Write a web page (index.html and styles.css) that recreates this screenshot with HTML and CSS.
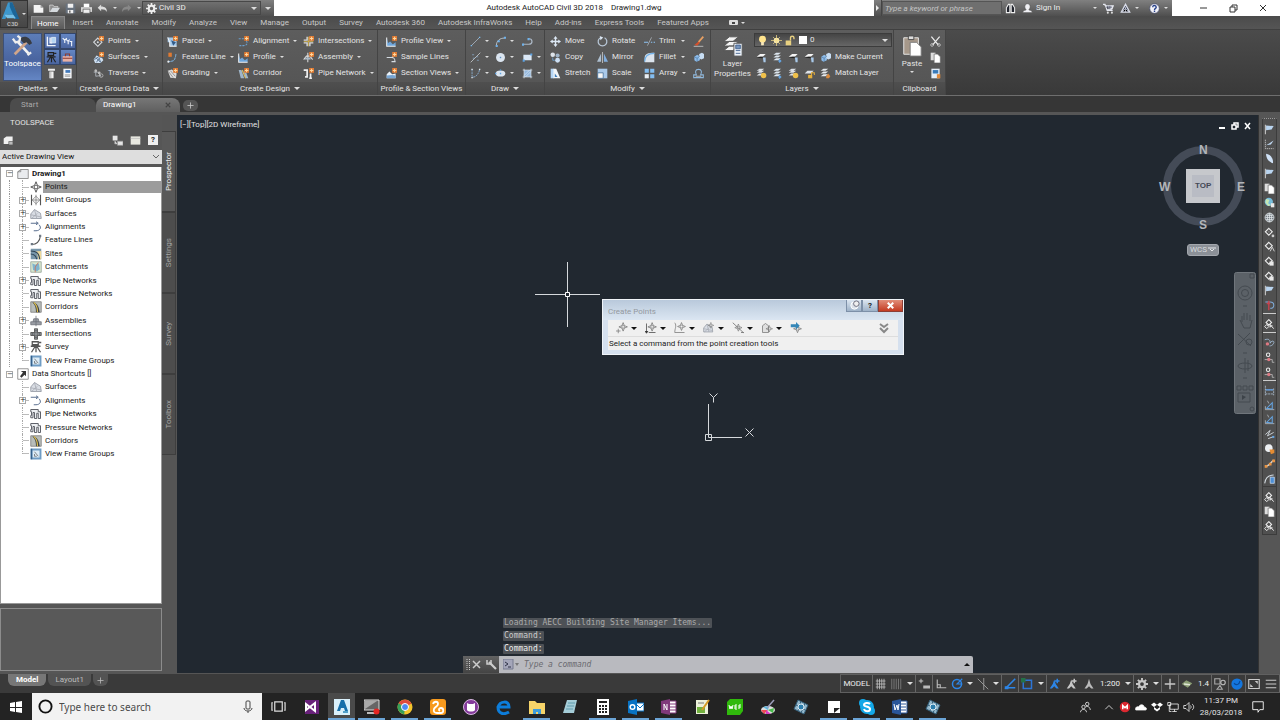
FILE: index.html
```html
<!DOCTYPE html>
<html lang="en">
<head>
<meta charset="utf-8">
<title>Autodesk AutoCAD Civil 3D 2018 - Drawing1.dwg</title>
<link rel="stylesheet" href="styles.css">
</head>
<body>
<svg class="sprite" aria-hidden="true">
<symbol id="new" viewBox="0 0 16 16"><path d="M9 0h7v7H9z" fill="#e07a32"/><path d="M12.500 1v5M10 3.500h5" stroke="#ffd9a0" stroke-width="1.500"/></symbol>
<symbol id="gear" viewBox="0 0 16 16"><circle cx="8" cy="8" r="4" fill="none" stroke="currentColor" stroke-width="3"/><path d="M8 0v4M8 12v4M0 8h4M12 8h4M2.500 2.500l3 3M10.500 10.500l3 3M13.500 2.500l-3 3M5.500 10.500l-3 3" stroke="currentColor" stroke-width="2.500"/></symbol>
<symbol id="page" viewBox="0 0 16 16"><path d="M1 3h10l4 4v7H1z" fill="#f4f4f4"/><path d="M11 3v4h4z" fill="#999"/></symbol>
<symbol id="open" viewBox="0 0 16 16"><path d="M1 13V3h5l1 2h6v2" fill="#8c8c8c" stroke="#ddd"/><path d="M1 13l4-6h11l-4 6z" fill="#d5dade"/></symbol>
<symbol id="save" viewBox="0 0 16 16"><path d="M1 1h14v14H1z" fill="#68727e"/><path d="M4 1h8v6H4zM4 10h8v5H4z" fill="#f0f0f0"/><path d="M6 11h2v3H6z" fill="#555"/></symbol>
<symbol id="print" viewBox="0 0 16 16"><path d="M4 1h8v5H4z" fill="#fff"/><path d="M0 6h16v7H0z" fill="#d4d4d4"/><path d="M3 9h10v6H3z" fill="#eee" stroke="#555"/></symbol>
<symbol id="undo" viewBox="0 0 16 16"><path d="M6 2L1 7l5 5V9c5 0 7 1 8 4 1-5-2-8-8-8z" fill="#ddd"/></symbol>
<symbol id="redo" viewBox="0 0 16 16"><path d="M10 2l5 5-5 5V9c-5 0-7 1-8 4-1-5 2-8 8-8z" fill="#888"/></symbol>
<symbol id="bino" viewBox="0 0 16 16"><path d="M2 14V7l3-5h2v12zM9 14V2h2l3 5v7z" fill="#22252e" stroke="#eee" stroke-width="1.500"/></symbol>
<symbol id="user" viewBox="0 0 16 16"><path d="M1 14c0-3 3-4 5-4-4-5-1-9 2-9s6 4 2 9c2 0 5 1 5 4z" fill="#f0f0f4" stroke="#555"/></symbol>
<symbol id="cart" viewBox="0 0 16 16"><path d="M0 2h3l3 9h8M4 4h11l-2 5H6" fill="#e4e6ee" stroke="#e4e6ee" stroke-width="1.500"/><path d="M5 6h8M7 4v5M10 4v5" stroke="#34384e"/><circle cx="7" cy="14" r="1.500" fill="#ddd"/><circle cx="13" cy="14" r="1.500" fill="#ddd"/></symbol>
<symbol id="apps" viewBox="0 0 16 16"><path d="M8 2l6 11H2z" fill="#30364b" stroke="#d9dce8" stroke-width="2"/><path d="M8 6v7M4 12l4-4 4 4" stroke="#d9dce8"/></symbol>
<symbol id="help" viewBox="0 0 16 16"><circle cx="8" cy="8" r="7" fill="#f2f2f8" stroke="#43496a"/><path d="M5.500 6c0-3.500 5-3 5 0 0 2-2.500 1.500-2.500 4M8 11v2" fill="none" stroke="#27418a" stroke-width="2"/></symbol>
<symbol id="diam" viewBox="0 0 16 16"><path d="M8 1l2 5 5 2-5 2-2 5-2-5-5-2 5-2z" fill="none" stroke="currentColor" stroke-width="1.300"/><circle cx="8" cy="8" r="2.300" fill="none" stroke="currentColor"/></symbol>
<symbol id="points" viewBox="0 0 16 16"><path d="M7 3l6 6-6 6-6-6z" fill="none" stroke="#d5d8dc" stroke-width="1.600"/><circle cx="7" cy="9" r="1.500" fill="#d5d8dc"/><use href="#new"/></symbol>
<symbol id="surf" viewBox="0 0 16 16"><path d="M1 11l4-6 8 3 2 4-4 4H3z" fill="#cfe0f2"/><path d="M2 11l6-4 5 1M5 15l4-6 2 6M4 8l7 7" stroke="#334e6d" fill="none"/><use href="#new"/></symbol>
<symbol id="trav" viewBox="0 0 16 16"><path d="M4 2v10M1 6h6M4 12l7-1M7 7l5 5" stroke="#aeb4bb" stroke-width="1.300" fill="none"/><circle cx="12" cy="11" r="2.500" fill="none" stroke="#ccc"/><circle cx="4" cy="4" r="2" fill="#bbb"/><circle cx="9" cy="7" r="2" fill="#bbb"/></symbol>
<symbol id="parcel" viewBox="0 0 16 16"><path d="M1 2h8v5h5v8H4V9H1z" fill="#a3c8ea"/><path d="M1 2l3 7v6h10" fill="none" stroke="#f2f2f2" stroke-width="1.500"/><path d="M6 6l3 8 4-5z" fill="#335c8a"/><use href="#new"/></symbol>
<symbol id="fline" viewBox="0 0 16 16"><path d="M1 14c9 0 11-2 12-11" stroke="#7aaad4" stroke-width="1.500" fill="none" stroke-dasharray="4 1"/><path d="M2 1h5v6H2z" fill="#e07a32"/><circle cx="2" cy="14" r="1.500" fill="#eee"/></symbol>
<symbol id="grading" viewBox="0 0 16 16"><path d="M1 4l6-2 7 6-1 7-8-1z" fill="#ddd"/><path d="M2 5l7 9M5 4l7 8" stroke="#777"/><use href="#new"/></symbol>
<symbol id="align" viewBox="0 0 16 16"><path d="M1 4h9M12 7c3 4 0 7-4 7H2" fill="none" stroke="#6a9ecd" stroke-width="1.500" stroke-dasharray="3 1.500"/><use href="#new"/></symbol>
<symbol id="profile" viewBox="0 0 16 16"><path d="M1 2v13h13V9l-4 3-4-4-3 2" fill="#6ea6dc"/><path d="M1 2v13h13" fill="none" stroke="#eee" stroke-width="1.500"/><use href="#new"/></symbol>
<symbol id="corridor" viewBox="0 0 16 16"><path d="M1 3h4l4 12H4zM8 4h3l4 11h-4z" fill="#9fb5c9"/><path d="M6 3l5 12" stroke="#e0c060" stroke-width="1.500"/><use href="#new"/></symbol>
<symbol id="inters" viewBox="0 0 16 16"><path d="M6 1v5H1M10 1v5h5M6 15v-5H1M10 15v-5h5" fill="none" stroke="#ddd" stroke-width="2"/><path d="M8 1v14M1 8h14" stroke="#d8b545"/><use href="#new"/></symbol>
<symbol id="assembly" viewBox="0 0 16 16"><path d="M7 1v14M1 11l4-5h5l4 5" stroke="#ddd" stroke-width="1.500" fill="none"/><path d="M3 8h8v3H3z" fill="#aab8c5"/><use href="#new"/></symbol>
<symbol id="pipe" viewBox="0 0 16 16"><path d="M1 3h5v10H3M11 15V8M9 15h4" stroke="#eee" stroke-width="2.500" fill="none"/><use href="#new"/></symbol>
<symbol id="sample" viewBox="0 0 16 16"><path d="M1 8h7c3 0 3-4 3-5M8 8c5 0 5 3 5 6M8 14h6" stroke="#d5dce2" stroke-width="1.500" fill="none"/><use href="#new"/></symbol>
<symbol id="secview" viewBox="0 0 16 16"><path d="M1 15V9l4-4 4 4 5-1v7z" fill="#eaf1f8"/><path d="M1 15v-4l8-1 5 1v4z" fill="#76a5d4"/><use href="#new"/></symbol>
<symbol id="line" viewBox="0 0 16 16"><path d="M2 14L14 2" stroke="#aab6c2" stroke-width="1.200"/><path d="M1 13h2v2H1zM13 1h2v2h-2z" fill="#7dbdf0"/></symbol>
<symbol id="cline" viewBox="0 0 16 16"><path d="M1 15L15 1" stroke="#c8ccd0" stroke-width="1.200"/><path d="M3 4h3M9 7h3M4 9h3M10 12h3" stroke="#8db3d6"/></symbol>
<symbol id="spl" viewBox="0 0 16 16"><path d="M3 2v10c0 3 9 1 11-10" stroke="#8eb5da" stroke-width="1.200" fill="none" stroke-dasharray="3 1"/><path d="M2 1h2v2H2zM2 13h2v2H2zM13 1h2v2h-2z" fill="#dfe8f0"/></symbol>
<symbol id="arc" viewBox="0 0 16 16"><path d="M2 14C2 7 7 3 14 3" stroke="#c2cad2" stroke-width="1.300" fill="none"/><path d="M1 13h3v3H1zM4 6h3v3H4zM13 1h3v3h-3z" fill="#6fb1ea"/></symbol>
<symbol id="pline" viewBox="0 0 16 16"><path d="M1 12h9c6 0 6-8 0-8" stroke="#aab6c4" stroke-width="1.800" fill="none"/><path d="M0 11h3v3H0zM8 3h3v3H8z" fill="#6fb1ea"/></symbol>
<symbol id="circ" viewBox="0 0 16 16"><circle cx="8" cy="8" r="6.500" fill="#dbe5f0"/><path d="M7 7h2v2H7z" fill="#5c91c4"/></symbol>
<symbol id="ell" viewBox="0 0 16 16"><ellipse cx="8" cy="8" rx="7" ry="4.500" fill="#dbe5f0"/><path d="M7 2h2v2H7zM7 7h2v2H7zM0 7h2v2H0z" fill="#5ca3e4"/></symbol>
<symbol id="rect" viewBox="0 0 16 16"><path d="M2 4h12v8H2z" fill="#dbe8f6"/><path d="M1 11h3v3H1zM12 2h3v3h-3z" fill="#5ca3e4"/></symbol>
<symbol id="hatch" viewBox="0 0 16 16"><path d="M3 3h10v10H3z" fill="#93b7dc"/><path d="M1 3h14M1 13h14M3 1v14M13 1v14M3 11l8-8M5 13l8-8" stroke="#e1ebf5"/></symbol>
<symbol id="move" viewBox="0 0 16 16"><path d="M8 0l3 4H9v3h3V5l4 3-4 3V9H9v3h2l-3 4-3-4h2V9H4v2L0 8l4-3v2h3V4H5z" fill="#dce8f4"/></symbol>
<symbol id="copy" viewBox="0 0 16 16"><circle cx="4" cy="4" r="3.300" fill="#dde3ea"/><circle cx="11" cy="5" r="3" fill="#9fb3c8"/><circle cx="11" cy="12" r="3.500" fill="#cde0f5"/><path d="M4 8v4h3" stroke="#6fb1ea" fill="none"/></symbol>
<symbol id="stretch" viewBox="0 0 16 16"><path d="M1 1h5v14H1z" fill="#b6d6f5"/><path d="M5 1h4l6 14H5z" fill="#f1f4f7"/><path d="M7 8l4 5H7z" fill="#3d7cba"/></symbol>
<symbol id="rot" viewBox="0 0 16 16"><path d="M5 2.500a6.300 6.300 0 1 0 6 0" fill="none" stroke="#b9c8d8" stroke-width="1.800"/><path d="M4 0l5 2-4 4z" fill="#dce8f4"/></symbol>
<symbol id="mirror" viewBox="0 0 16 16"><path d="M6 2v12H0z" fill="#aebfd0"/><path d="M10 2v12h6z" fill="#82aede"/><path d="M8 0v16" stroke="#ddd"/></symbol>
<symbol id="scale" viewBox="0 0 16 16"><path d="M1 1h14v14H1z" fill="#a9c9ea"/><path d="M1 7h8v8H1z" fill="#f6f6f6" stroke="#33608d"/></symbol>
<symbol id="trim" viewBox="0 0 16 16"><path d="M0 9h6M10 9h2M14 9h2" stroke="#8cc2f4" stroke-width="1.500"/><path d="M5 14L11 2" stroke="#b9c1c8"/></symbol>
<symbol id="fillet" viewBox="0 0 16 16"><path d="M1 15V8c0-5 5-7 14-7v14z" fill="#dce4ed"/><path d="M1 14C1 5 7 2 15 2" fill="none" stroke="#6fb1ea" stroke-width="1.500"/></symbol>
<symbol id="array" viewBox="0 0 16 16"><path d="M1 1h6v6H1zM9 1h6v6H9zM9 9h6v6H9z" fill="#83bdf1"/><path d="M1 9h6v6H1z" fill="#e9eef3"/></symbol>
<symbol id="brush" viewBox="0 0 16 16"><path d="M15 1L8 9" stroke="#e8a063" stroke-width="2.500"/><path d="M8 8l2 2-4 4-4-1z" fill="#d4502c"/><path d="M1 15h14" stroke="#ddd"/></symbol>
<symbol id="explode" viewBox="0 0 16 16"><path d="M2 7l4-3 4 2v6l-5 2-3-2z" fill="#8dbceb"/><path d="M9 3l4-2 3 2v6l-4 2-3-2z" fill="#c7ddf3"/><path d="M2 7l4 2v5M6 9l4-3" stroke="#4d779f" fill="none"/></symbol>
<symbol id="offset" viewBox="0 0 16 16"><path d="M1 14h14v-4h-4c2-4 2-8-3-8s-5 4-3 8H1z" fill="none" stroke="#8fb8dd" stroke-width="1.500"/><path d="M4 12h8" stroke="#ddd"/></symbol>
<symbol id="lay" viewBox="0 0 16 16"><path d="M1 7l5-4h8l-4 4z" fill="#f5f5f5"/><path d="M1 8l5-1h5l-2 2z" fill="#222"/><path d="M10 8h4v7h-3z" fill="#a9c9e9"/></symbol>
<symbol id="lay2" viewBox="0 0 16 16"><path d="M2 12l4-3h7l-4 3zM2 8l4-3h7L9 8zM2 4l4-3h7L9 4z" fill="#dde7f0"/><path d="M11 10l3 3-3 3-2-3z" fill="#65a5e2"/></symbol>
<symbol id="layy" viewBox="0 0 16 16"><path d="M1 11l4-3h7l-4 3zM1 7l4-3h7L8 7zM1 4l4-3h7L8 4z" fill="#dde2e8"/><circle cx="11" cy="11" r="4" fill="#efc04b"/></symbol>
<symbol id="layo" viewBox="0 0 16 16"><path d="M1 8l4-4h9l-4 4z" fill="#dde2e8"/><path d="M6 10h6v5H6z" fill="#e6b03c"/><path d="M11 10V7h4v3" stroke="#e6b03c" stroke-width="1.500" fill="none"/></symbol>
<symbol id="laym" viewBox="0 0 16 16"><path d="M1 12l4-3h7l-4 3zM1 8l4-3h7L8 8zM1 4l4-3h7L8 4z" fill="#e6eaee"/><path d="M9 12l3-4 3 4-2 3H9z" fill="#d98a3e"/></symbol>
<symbol id="bulb" viewBox="0 0 16 16"><circle cx="8" cy="6" r="5" fill="#ffe48d"/><path d="M6 10h4v5H6z" fill="#f8e8ba"/></symbol>
<symbol id="sun" viewBox="0 0 16 16"><circle cx="8" cy="8" r="4" fill="#f6e9b8"/><path d="M8 0v16M0 8h16M3 3l10 10M13 3L3 13" stroke="#f6df88"/></symbol>
<symbol id="lock" viewBox="0 0 16 16"><path d="M1 8h8v7H1z" fill="#e8d080"/><path d="M8 8V4c0-3 5-3 5 0v2" fill="none" stroke="#e8d080" stroke-width="2"/></symbol>
<symbol id="scis" viewBox="0 0 16 16"><path d="M2 1l10 12M14 1L4 13" stroke="#eee" stroke-width="1.800"/><circle cx="3" cy="13" r="2" fill="none" stroke="#ddd"/><circle cx="13" cy="13" r="2" fill="none" stroke="#ddd"/></symbol>
<symbol id="dup" viewBox="0 0 16 16"><path d="M1 1h7v11H1z" fill="#ddd"/><path d="M6 3h5l4 4v9H6z" fill="#fff" stroke="#666"/></symbol>
<symbol id="pspec" viewBox="0 0 16 16"><path d="M2 1h12v14H2z" fill="#e5eef8"/><path d="M4 3h8v5H4z" fill="#397ab9"/><path d="M10 9h5v6h-5z" fill="#e08a3c"/></symbol>
<symbol id="book" viewBox="0 0 16 16"><path d="M2 1v13h12M6 2v8h3" stroke="#f2f6fc" stroke-width="2" fill="none"/><path d="M8 2h6v8H8z" fill="#b5d6f3" stroke="#f2f6fc"/></symbol>
<symbol id="ttt" viewBox="0 0 16 16"><path d="M1 3l3 3 3-3M4 6v4M6 5l3 3 2-3M9 8v4M11 8h4M14 8v7" stroke="#f0f5fc" stroke-width="1.600" fill="none"/></symbol>
<symbol id="transit" viewBox="0 0 16 16"><path d="M3 1h8v4H3zM12 2h3M1 7h13M7 5v3M7 7l-5 8M8 7v8M9 7l5 8" stroke="currentColor" stroke-width="1.700" fill="none"/></symbol>
<symbol id="toolbox" viewBox="0 0 16 16"><path d="M1 6h14v8H1z" fill="#e8b0a4"/><path d="M5 6V3h6v3M1 9h14" stroke="#8c3b31" stroke-width="1.500" fill="none"/></symbol>
<symbol id="cols" viewBox="0 0 16 16"><path d="M3 1h10v3H3zM5 5h6v10H5z" fill="#f1f1f1"/><path d="M7 5v10" stroke="#999"/></symbol>
<symbol id="cal" viewBox="0 0 16 16"><path d="M2 1h12v14H2z" fill="#f5f7fa"/><path d="M5 3h7v4H5z" fill="#4279bb"/><path d="M4 10h8M4 12h8" stroke="#777"/></symbol>
<symbol id="pgroup" viewBox="0 0 16 16"><path d="M2 1v14M14 1v14" stroke="#555" stroke-width="1.500"/><path d="M8 3l5 5-5 5-5-5zM8 1v14M3 8h10" fill="none" stroke="#777"/></symbol>
<symbol id="tsurf" viewBox="0 0 16 16"><path d="M1 14V8l5-6 8 5 1 7z" fill="#d9dde4" stroke="#8a8f99"/><path d="M1 9l14 3M6 2l3 12M2 14l8-7" stroke="#a5aab2"/></symbol>
<symbol id="talign" viewBox="0 0 16 16"><path d="M1 3h9M8 1l3 2-3 2M12 5c4 4 1 8-4 8H5" fill="none" stroke="#556b8c" stroke-width="1.300"/></symbol>
<symbol id="tfl" viewBox="0 0 16 16"><path d="M2 14c8 0 11-4 12-12" fill="none" stroke="#555" stroke-width="1.500"/><path d="M1 12h3v3H1zM12 1h3v3h-3z" fill="#6e7884"/></symbol>
<symbol id="tsite" viewBox="0 0 16 16"><path d="M1 1h14v14H1z" fill="#7796aa"/><path d="M1 5h8l2 10h4V4" fill="#ecd89a"/><path d="M1 4c8 0 11 3 12 11M1 8c5 0 7 2 8 7" stroke="#2d4355" stroke-width="1.500" fill="none"/></symbol>
<symbol id="tcatch" viewBox="0 0 16 16"><path d="M1 1h14v14H1z" fill="#d9e8cf" stroke="#8e9b91"/><path d="M3 3l4 2 5-2 1 8-4 3-5-2z" fill="#7fb4ce"/><path d="M11 2l-4 6v7" stroke="#d06950" fill="none"/></symbol>
<symbol id="tpipe" viewBox="0 0 16 16"><path d="M1 2h10v3h3v9h-3V7H9v7H6V6H4v7H1v-3h1V5H1z" fill="#eceef1" stroke="#5a5e66" stroke-width="1.300"/></symbol>
<symbol id="tcorr" viewBox="0 0 16 16"><path d="M1 1h14v14H1z" fill="#b8bdba" stroke="#777"/><path d="M3 2h3c5 3 6 7 7 13H8c0-6-1-10-5-13z" fill="#3c4146"/><path d="M5 2c4 3 5 7 5 13" stroke="#e2c24c" stroke-width="1.500" fill="none"/></symbol>
<symbol id="tasm" viewBox="0 0 16 16"><path d="M1 13V9h14v4zM4 9l1-4h6l1 4M8 1v14" fill="#9a9ea5" stroke="#696e76"/></symbol>
<symbol id="tint" viewBox="0 0 16 16"><path d="M6 1h4v5h5v4h-5v5H6v-5H1V6h5z" fill="#60656a" stroke="#444"/><path d="M8 1v14M1 8h14" stroke="#bbb" stroke-dasharray="2 1"/></symbol>
<symbol id="tview" viewBox="0 0 16 16"><path d="M2 2h12v12H2z" fill="#dcecf7" stroke="#6f9cc4" stroke-width="2.500"/><path d="M2 1v14" stroke="#35618c" stroke-width="2"/><path d="M6 5l5 6M6 8v3h3" stroke="#666" fill="none"/></symbol>
<symbol id="folder" viewBox="0 0 16 16"><path d="M1 14V5l4-3h10v12z" fill="#e9ebee" stroke="#777"/><path d="M1 5h4V2" fill="none" stroke="#777"/></symbol>
<symbol id="short" viewBox="0 0 16 16"><path d="M1 1h14v14H1z" fill="#fff" stroke="#777"/><path d="M5 4h7v7l-2-2-4 4-2-2 4-5z" fill="#333"/></symbol>
<symbol id="flag" viewBox="0 0 16 16"><path d="M2 1v14" stroke="#ccc" stroke-width="1.500"/><path d="M3 2l11 1-3 5-8 1z" fill="#b9d4ef"/></symbol>
<symbol id="slope" viewBox="0 0 16 16"><path d="M2 1v13h12" stroke="#ddd" fill="none" stroke-dasharray="2 1"/><path d="M3 9l5-3 6-4-4 6z" fill="#bfd8f2"/></symbol>
<symbol id="leaf" viewBox="0 0 16 16"><path d="M3 1c6 1 11 6 10 14C8 13 3 9 3 1z" fill="#cfe1f6"/></symbol>
<symbol id="globe" viewBox="0 0 16 16"><circle cx="8" cy="8" r="6.500" fill="#767d84" stroke="#e8edf0"/><path d="M8 2v12M2 8h12M3 5h10M3 11h10" stroke="#e8edf0"/><ellipse cx="8" cy="8" rx="3" ry="6" fill="none" stroke="#e8edf0"/></symbol>
<symbol id="earth" viewBox="0 0 16 16"><circle cx="7" cy="7" r="6" fill="#77bddb"/><path d="M3 3l5 1-2 5 4 3-4 1-4-5z" fill="#c6e7b4"/><path d="M10 9h5v6h-5z" fill="#e8e8e8"/></symbol>
<symbol id="pt" viewBox="0 0 16 16"><path d="M7 2l5 5-5 5-5-5z" fill="none" stroke="#eee" stroke-width="1.600"/><circle cx="7" cy="7" r="1.500" fill="#777"/><circle cx="13" cy="13" r="2" fill="#ccc"/></symbol>
<symbol id="pta" viewBox="0 0 16 16"><path d="M7 2l5 5-5 5-5-5z" fill="none" stroke="#eee" stroke-width="1.600"/><path d="M9 15l3-6 3 6" stroke="#ddd" fill="none" stroke-width="1.300"/></symbol>
<symbol id="ptl" viewBox="0 0 16 16"><path d="M7 2l5 5-5 5-5-5z" fill="none" stroke="#eee" stroke-width="1.600"/><path d="M8 8h6v6H8z" fill="#e8e8e8"/></symbol>
<symbol id="ptc" viewBox="0 0 16 16"><path d="M7 1l4 4-4 4-4-4z" fill="none" stroke="#eee" stroke-width="1.600"/><path d="M4 8l3 3-3 3-3-3zM9 8l5 6M9 8v4l3-3" fill="none" stroke="#f4f4f4" stroke-width="1.400"/></symbol>
<symbol id="red" viewBox="0 0 16 16"><path d="M2 3h7c7 0 7 9 0 9" fill="none" stroke="#7facdb" stroke-width="1.500"/><path d="M7 1v14M4 5h5" stroke="#c9414c" stroke-width="2"/></symbol>
<symbol id="redc" viewBox="0 0 16 16"><path d="M1 4c6-2 8 0 8 5 2-5 7-3 5 0-1 3-4 4-6 4" fill="none" stroke="#9db6cf" stroke-width="1.300"/><circle cx="5" cy="10" r="2.500" fill="#dd7982"/></symbol>
<symbol id="redp" viewBox="0 0 16 16"><circle cx="6" cy="4" r="2.500" fill="none" stroke="#eee" stroke-width="1.500"/><circle cx="7" cy="11" r="2.500" fill="#dd7982"/><path d="M1 11h4M9 11h3v4h3" stroke="#ccc" fill="none"/></symbol>
<symbol id="dim" viewBox="0 0 16 16"><path d="M2 1v14M14 5v10M2 7h12M2 13h12" stroke="#bcd0e5" fill="none" stroke-dasharray="3 1"/><path d="M3 7h10" stroke="#5e9bdd" stroke-width="2"/></symbol>
<symbol id="dim2" viewBox="0 0 16 16"><path d="M2 9v5h13M5 1l2 4" stroke="#c5ccd4" fill="none"/><path d="M4 12l8-8v9z" fill="none" stroke="#65a5e2" stroke-width="1.500"/></symbol>
<symbol id="zig" viewBox="0 0 16 16"><path d="M2 8l7-6-4 8 9-5M6 14l8-3" stroke="#d5dce2" fill="none" stroke-width="1.300"/><path d="M12 10h3v3h-3z" fill="#65a5e2"/></symbol>
<symbol id="cone" viewBox="0 0 16 16"><circle cx="7" cy="6" r="5.500" fill="#eceff2"/><path d="M8 8h7v5l-5 2z" fill="#e58c32"/></symbol>
<symbol id="orange" viewBox="0 0 16 16"><path d="M2 13l5-3 7-7" stroke="#ddd" stroke-width="2" fill="none"/><path d="M1 10h4v4H1zM7 7h4v4H7zM12 2h4v4h-4z" fill="#e89443"/></symbol>
<symbol id="arcb" viewBox="0 0 16 16"><path d="M1 15C2 7 7 3 14 3" stroke="#d5dce2" stroke-width="1.500" fill="none"/><path d="M9 6h6v9H9z" fill="#4d8fd6" stroke="#dbe8f6"/></symbol>
<symbol id="grid" viewBox="0 0 16 16"><path d="M3 1v14M6 1v14M9 1v14M12 1v14M1 4h13M1 8h13M1 12h13" stroke="#c9c9c9"/></symbol>
<symbol id="bars" viewBox="0 0 16 16"><path d="M1 1v14M4 1v14M7 1v14M10 1v14M13 1v14" stroke="#888"/></symbol>
<symbol id="dyn" viewBox="0 0 16 16"><path d="M1 4h6M4 1v6" stroke="#ccc" stroke-width="1.300"/><path d="M7 10h9v4H7z" fill="#bbb"/></symbol>
<symbol id="ortho" viewBox="0 0 16 16"><path d="M3 2v11h12M3 9h4v4" stroke="#bbb" stroke-width="1.500" fill="none"/></symbol>
<symbol id="polar" viewBox="0 0 16 16"><circle cx="8" cy="8" r="6" fill="none" stroke="#2d86e8" stroke-width="2"/><path d="M15 1L8 8h7" fill="none" stroke="#2d86e8" stroke-width="1.500"/></symbol>
<symbol id="iso" viewBox="0 0 16 16"><path d="M1 1l14 14M9 0v16" stroke="#999" stroke-width="1.300"/></symbol>
<symbol id="track" viewBox="0 0 16 16"><path d="M15 1L3 13h12" fill="none" stroke="#2d86e8" stroke-width="2"/><path d="M1 11h5v4H1z" fill="#2d86e8"/></symbol>
<symbol id="snap" viewBox="0 0 16 16"><path d="M3 3h11v11H3z" fill="none" stroke="#2d75d5" stroke-width="2"/><path d="M0 0h6v6H0z" fill="#247148"/></symbol>
<symbol id="ann" viewBox="0 0 16 16"><path d="M7 2l2 6 4 6h-3l-3-3-3 3H1l4-6z" fill="currentColor"/><path d="M11 1v6M8 4h6" stroke="currentColor" stroke-width="2"/></symbol>
<symbol id="ann2" viewBox="0 0 16 16"><path d="M8 1l2 7 4 6h-3l-3-3-3 3H2l4-6z" fill="#bbb"/></symbol>
<symbol id="plus" viewBox="0 0 16 16"><path d="M8 1v14M1 8h14" stroke="currentColor" stroke-width="1.800"/></symbol>
<symbol id="geo" viewBox="0 0 16 16"><path d="M1 8l6-5 8 4-6 6z" fill="#8b9d75"/><path d="M4 8l8 1" stroke="#dfe6d5" stroke-width="2"/></symbol>
<symbol id="shapes" viewBox="0 0 16 16"><path d="M1 1h7v7H1zM4 15l4-5 3 5z" fill="none" stroke="#aaa" stroke-width="1.500"/><circle cx="12" cy="6" r="3" fill="none" stroke="#bbb" stroke-width="1.500"/></symbol>
<symbol id="perf" viewBox="0 0 16 16"><circle cx="8" cy="8" r="7.500" fill="#1476de"/><path d="M4 7c4 4 7 1 8-3" stroke="#0a4a98" fill="none" stroke-width="1.500"/></symbol>
<symbol id="full" viewBox="0 0 16 16"><path d="M1 2h14v12H1z" fill="none" stroke="#ccc" stroke-width="1.500"/><path d="M9 4h4v4zM7 12H3V8z" fill="#ccc"/></symbol>
<symbol id="menu" viewBox="0 0 16 16"><path d="M1 3h14M1 8h14M1 13h14" stroke="#ccc" stroke-width="1.500"/></symbol>
<symbol id="civil" viewBox="0 0 16 16"><path d="M5 1l10 5-4 9L1 10z" fill="#94b8cc"/><path d="M5 1l10 5-4 9L1 10zM3 6l9 5M8 2l-3 10M12 4L8 14" fill="none" stroke="#335e78"/><circle cx="8" cy="8" r="3" fill="#2b7dac" stroke="#dcecf4"/></symbol>
</svg>

<header class="top">
  <button class="appbtn" aria-label="Application menu">
    <svg viewBox="0 0 24 24"><path d="M1 20L8 1h5l7 19h-5l-2-5H7l-2 5z" fill="#3d97cd"/><path d="M10 1h3l8 19h-5L10 6z" fill="#1c6598"/><path d="M4 15h10l3 4H7z" fill="#76c0e7"/></svg>
    <span class="c3d">C3D</span><i class="car"></i>
  </button>
  <div class="title">
    <div class="qat">
      <svg class="ic"><use href="#page"/></svg><svg class="ic"><use href="#open"/></svg><svg class="ic"><use href="#save"/></svg><svg class="ic"><use href="#print"/></svg><svg class="ic"><use href="#undo"/></svg><i class="car"></i><svg class="ic"><use href="#redo"/></svg><i class="car"></i>
      <button class="workspace"><svg class="ic"><use href="#gear"/></svg><span>Civil 3D</span><i class="car big"></i></button>
      <i class="car big"></i>
    </div>
    <h1>Autodesk AutoCAD Civil 3D 2018 &nbsp;&nbsp; Drawing1.dwg</h1>
    <div class="info">
      <button class="play" aria-label="Expand"><i></i></button>
      <input type="text" placeholder="Type a keyword or phrase" aria-label="Search help">
      <svg class="ic"><use href="#bino"/></svg>
      <button class="sign"><svg class="ic"><use href="#user"/></svg>Sign In<i class="car"></i></button>
      <svg class="ic"><use href="#cart"/></svg><svg class="ic"><use href="#apps"/></svg><i class="car"></i>
      <svg class="ic helpic"><use href="#help"/></svg><i class="car"></i>
    </div>
    <div class="win">
      <button aria-label="Minimize"><svg viewBox="0 0 12 12"><path d="M3 6h7"/></svg></button>
      <button aria-label="Restore"><svg viewBox="0 0 12 12"><path d="M3 5h5v5H3zM5 5V3h5v5H8"/></svg></button>
      <button aria-label="Close"><svg viewBox="0 0 12 12"><path d="M3 3l6 6M9 3L3 9"/></svg></button>
    </div>
  </div>
  <nav class="tabs">
    <a href="#" class="on">Home</a><a href="#">Insert</a><a href="#">Annotate</a><a href="#">Modify</a><a href="#">Analyze</a><a href="#">View</a><a href="#">Manage</a><a href="#">Output</a><a href="#">Survey</a><a href="#">Autodesk 360</a><a href="#">Autodesk InfraWorks</a><a href="#">Help</a><a href="#">Add-ins</a><a href="#">Express Tools</a><a href="#">Featured Apps</a>
    <button class="rmin" aria-label="Minimize ribbon"><i></i></button><i class="car"></i>
  </nav>
</header>

<section class="ribbon" aria-label="Ribbon">
  <div class="panel"><div class="body palettes">
    <button class="toolspace"><svg viewBox="0 0 24 24"><path d="M7 7l12 13" stroke="#f2f2f2" stroke-width="3"/><path d="M2 4l3 4 4-1 1-4-3-2M18 22l4-3" stroke="#eee" stroke-width="2.500" fill="none"/><path d="M17 8L4 21" stroke="#d0a58a" stroke-width="3"/><path d="M11 3c5-3 10 0 12 6l-3 2-3-3-3 1-3-3z" fill="#383c43"/></svg>Toolspace</button>
    <div class="pal">
      <button class="b" aria-label="Panorama"><svg class="ic"><use href="#book"/></svg></button><button class="b" aria-label="Survey toolspace"><svg class="ic"><use href="#ttt"/></svg></button>
      <button class="b dark" aria-label="Survey"><svg class="ic"><use href="#transit"/></svg></button><button class="b" aria-label="Toolbox"><svg class="ic"><use href="#toolbox"/></svg></button>
      <button aria-label="Tool palettes"><svg class="ic"><use href="#cols"/></svg></button><button aria-label="Properties"><svg class="ic"><use href="#cal"/></svg></button>
    </div></div><button class="foot">Palettes<i class="car big"></i></button></div>

  <div class="panel"><div class="body ground">
    <button><svg class="ic"><use href="#points"/></svg>Points<i class="car"></i></button>
    <button><svg class="ic"><use href="#surf"/></svg>Surfaces<i class="car"></i></button>
    <button><svg class="ic"><use href="#trav"/></svg>Traverse<i class="car"></i></button>
  </div><button class="foot">Create Ground Data<i class="car big"></i></button></div>

  <div class="panel"><div class="body design">
    <button><svg class="ic"><use href="#parcel"/></svg>Parcel<i class="car"></i></button><button><svg class="ic"><use href="#align"/></svg>Alignment<i class="car"></i></button><button><svg class="ic"><use href="#inters"/></svg>Intersections<i class="car"></i></button>
    <button><svg class="ic"><use href="#fline"/></svg>Feature Line<i class="car"></i></button><button><svg class="ic"><use href="#profile"/></svg>Profile<i class="car"></i></button><button><svg class="ic"><use href="#assembly"/></svg>Assembly<i class="car"></i></button>
    <button><svg class="ic"><use href="#grading"/></svg>Grading<i class="car"></i></button><button><svg class="ic"><use href="#corridor"/></svg>Corridor</button><button><svg class="ic"><use href="#pipe"/></svg>Pipe Network<i class="car"></i></button>
  </div><button class="foot">Create Design<i class="car big"></i></button></div>

  <div class="panel"><div class="body views">
    <button><svg class="ic"><use href="#profile"/></svg>Profile View<i class="car"></i></button>
    <button><svg class="ic"><use href="#sample"/></svg>Sample Lines</button>
    <button><svg class="ic"><use href="#secview"/></svg>Section Views<i class="car"></i></button>
  </div><div class="foot">Profile &amp; Section Views</div></div>

  <div class="panel"><div class="body draw">
    <button aria-label="Line"><svg class="ic"><use href="#line"/></svg><i class="car"></i></button><button aria-label="Arc"><svg class="ic"><use href="#arc"/></svg><i class="car"></i></button><button aria-label="Polyline"><svg class="ic"><use href="#pline"/></svg></button>
    <button aria-label="Construction line"><svg class="ic"><use href="#cline"/></svg><i class="car"></i></button><button aria-label="Circle"><svg class="ic"><use href="#circ"/></svg><i class="car"></i></button><button aria-label="Rectangle"><svg class="ic"><use href="#rect"/></svg><i class="car"></i></button>
    <button aria-label="Spline"><svg class="ic"><use href="#spl"/></svg><i class="car"></i></button><button aria-label="Ellipse"><svg class="ic"><use href="#ell"/></svg><i class="car"></i></button><button aria-label="Hatch"><svg class="ic"><use href="#hatch"/></svg><i class="car"></i></button>
  </div><button class="foot">Draw<i class="car big"></i></button></div>

  <div class="panel"><div class="body modify">
    <button><svg class="ic"><use href="#move"/></svg>Move</button><button><svg class="ic"><use href="#rot"/></svg>Rotate</button><button><svg class="ic"><use href="#trim"/></svg><span>Trim</span><i class="car"></i></button><button aria-label="Erase"><svg class="ic"><use href="#brush"/></svg></button>
    <button><svg class="ic"><use href="#copy"/></svg>Copy</button><button><svg class="ic"><use href="#mirror"/></svg>Mirror</button><button><svg class="ic"><use href="#fillet"/></svg><span>Fillet</span><i class="car"></i></button><button aria-label="Explode"><svg class="ic"><use href="#explode"/></svg></button>
    <button><svg class="ic"><use href="#stretch"/></svg>Stretch</button><button><svg class="ic"><use href="#scale"/></svg>Scale</button><button><svg class="ic"><use href="#array"/></svg><span>Array</span><i class="car"></i></button><button aria-label="Offset"><svg class="ic"><use href="#offset"/></svg></button>
  </div><button class="foot">Modify<i class="car big"></i></button></div>

  <div class="panel"><div class="body layers">
    <button class="tall"><svg viewBox="0 0 24 24"><path d="M2 17l6-5h10l-6 5zM2 12l6-5h10l-6 5zM2 7l6-5h10l-6 5z" fill="#f4f4f4" stroke="#555"/><path d="M13 9h9v14h-9z" fill="#edf3fa" stroke="#555"/><path d="M15 11h5v4h-5zM15 17h5M15 20h5" fill="#7695bd" stroke="#44618c"/></svg><span>Layer<br>Properties</span></button>
    <div class="laygrid">
      <button class="combo"><svg class="ic"><use href="#bulb"/></svg><svg class="ic"><use href="#sun"/></svg><svg class="ic"><use href="#lock"/></svg><b></b>0<i class="car big"></i></button>
      <div class="lrow"><svg class="ic"><use href="#lay"/></svg><svg class="ic"><use href="#lay2"/></svg><svg class="ic"><use href="#lay"/></svg><svg class="ic"><use href="#lay"/></svg><button><svg class="ic"><use href="#explode"/></svg>Make Current</button></div>
      <div class="lrow"><svg class="ic"><use href="#layy"/></svg><svg class="ic"><use href="#lay2"/></svg><svg class="ic"><use href="#layy"/></svg><svg class="ic"><use href="#layo"/></svg><button><svg class="ic"><use href="#laym"/></svg>Match Layer</button></div>
    </div>
  </div><button class="foot">Layers<i class="car big"></i></button></div>

  <div class="panel"><div class="body clip">
    <button class="tall"><svg viewBox="0 0 24 24"><path d="M3 3h16v18H3z" fill="#a6988a" stroke="#eee"/><path d="M8 1h6v4H8z" fill="#ddd" stroke="#444"/><path d="M10 8h7l5 5v10H10z" fill="#fff" stroke="#777"/></svg>Paste<i class="car"></i></button>
    <div class="cc"><button aria-label="Cut"><svg class="ic"><use href="#scis"/></svg></button><button aria-label="Copy clip"><svg class="ic"><use href="#dup"/></svg></button><button aria-label="Paste special"><svg class="ic"><use href="#pspec"/></svg></button></div>
  </div><div class="foot">Clipboard</div></div>
</section>

<nav class="docs">
  <a href="#" class="doc">Start</a>
  <a href="#" class="doc on"><span>Drawing1</span><svg viewBox="0 0 8 8"><path d="M1 1l6 6M7 1L1 7" stroke="#444" stroke-width="1.500"/></svg></a>
  <button aria-label="New drawing"><svg viewBox="0 0 16 16"><use href="#plus"/></svg></button>
</nav>

<main class="work">
  <aside class="space">
    <div class="left">
      <h2>TOOLSPACE</h2>
      <div class="bar"><svg class="ic" viewBox="0 0 16 16"><path d="M1 13V5l4-3h9v7H8v4z" fill="#f0f0f0"/><path d="M9 10h5v4H9z" fill="#bbb"/></svg>
        <svg class="ic" viewBox="0 0 16 16"><path d="M1 1h7v7H1z" fill="#e5e5e5"/><path d="M4 8v5h4M8 9h8v6H8z" fill="#e5e5e5" stroke="#999"/></svg>
        <svg class="ic" viewBox="0 0 16 16"><path d="M1 2h14v12H1z" fill="#e8e8e0"/><path d="M1 5h14" stroke="#bbb"/></svg>
        <button aria-label="Help">?</button></div>
      <select aria-label="View"><option>Active Drawing View</option></select>
      <ul class="tree">
        <li class="root"><i class="ex">−</i><svg class="ic"><use href="#folder"/></svg><strong>Drawing1</strong></li>
        <li class="sel trunk"><i class="no"></i><svg class="ic"><use href="#diam"/></svg><span>Points</span></li>
        <li class="trunk"><i class="ex">+</i><svg class="ic"><use href="#pgroup"/></svg><span>Point Groups</span></li>
        <li class="trunk"><i class="ex">+</i><svg class="ic"><use href="#tsurf"/></svg><span>Surfaces</span></li>
        <li class="trunk"><i class="ex">+</i><svg class="ic"><use href="#talign"/></svg><span>Alignments</span></li>
        <li class="trunk"><i class="no"></i><svg class="ic"><use href="#tfl"/></svg><span>Feature Lines</span></li>
        <li class="trunk"><i class="no"></i><svg class="ic"><use href="#tsite"/></svg><span>Sites</span></li>
        <li class="trunk"><i class="no"></i><svg class="ic"><use href="#tcatch"/></svg><span>Catchments</span></li>
        <li class="trunk"><i class="ex">+</i><svg class="ic"><use href="#tpipe"/></svg><span>Pipe Networks</span></li>
        <li class="trunk"><i class="no"></i><svg class="ic"><use href="#tpipe"/></svg><span>Pressure Networks</span></li>
        <li class="trunk"><i class="no"></i><svg class="ic"><use href="#tcorr"/></svg><span>Corridors</span></li>
        <li class="trunk"><i class="ex">+</i><svg class="ic"><use href="#tasm"/></svg><span>Assemblies</span></li>
        <li class="trunk"><i class="no"></i><svg class="ic"><use href="#tint"/></svg><span>Intersections</span></li>
        <li class="trunk"><i class="ex">+</i><svg class="ic"><use href="#transit"/></svg><span>Survey</span></li>
        <li class="trunk last"><i class="no"></i><svg class="ic"><use href="#tview"/></svg><span>View Frame Groups</span></li>
        <li class="root"><i class="ex">−</i><svg class="ic"><use href="#short"/></svg><span>Data Shortcuts []</span></li>
        <li><i class="no"></i><svg class="ic"><use href="#tsurf"/></svg><span>Surfaces</span></li>
        <li><i class="ex">+</i><svg class="ic"><use href="#talign"/></svg><span>Alignments</span></li>
        <li><i class="no"></i><svg class="ic"><use href="#tpipe"/></svg><span>Pipe Networks</span></li>
        <li><i class="no"></i><svg class="ic"><use href="#tpipe"/></svg><span>Pressure Networks</span></li>
        <li><i class="no"></i><svg class="ic"><use href="#tcorr"/></svg><span>Corridors</span></li>
        <li class="last"><i class="no"></i><svg class="ic"><use href="#tview"/></svg><span>View Frame Groups</span></li>
      </ul>
      <div class="preview"></div>
    </div>
    <nav class="side"><a href="#" class="on"><span>Prospector</span></a><a href="#"><span>Settings</span></a><a href="#"><span>Survey</span></a><a href="#"><span>Toolbox</span></a></nav>
  </aside>

  <section class="canvas" aria-label="Drawing">
    <p class="vp">[−][Top][2D Wireframe]</p>
    <svg class="vpwin" viewBox="0 0 36 10" aria-hidden="true"><path d="M2 7h6" stroke="#fff" stroke-width="2"/><path d="M15 4h4v4h-4zM17 4V2h4v4h-2M28 2l5 6M33 2l-5 6" stroke="#fff" stroke-width="1.500" fill="none"/></svg>
    <svg class="cross" viewBox="0 0 65 65"><path d="M32.500 0v30M32.500 35v30M0 32.500h30M35 32.500h30" stroke="#d6d9dc"/><path d="M30.500 30.500h4v4h-4z" fill="none" stroke="#fff"/></svg>
    <svg class="ucs" viewBox="0 0 52 52"><path d="M3.500 11v33.500H37M.500 41.500h6v6h-6zM4.500.500l4 4 4-4M8.500 4.500v5M40.500 35.500l8 8M48.500 35.500l-8 8" fill="none" stroke="#d6d9dc"/></svg>
    <div class="cube">
      <svg viewBox="0 0 88 92" role="img" aria-label="View cube"><circle cx="44" cy="45" r="36" fill="none" stroke="#444b57" stroke-width="8"/><path d="M27 28h34v34H27z" fill="#c6c8cc"/><path d="M33 34h22v22H33z" fill="#b9bcc4"/></svg>
      <b class="n">N</b><b class="w">W</b><b class="e">E</b><b class="s">S</b><span>TOP</span>
    </div>
    <button class="wcs">WCS<svg viewBox="0 0 8 6"><path d="M0 1h8M2 2l2 2 2-2" stroke="#e6e8ea" fill="none"/></svg></button>
    <svg class="nav" viewBox="0 0 22 142" role="img" aria-label="Navigation bar"><rect x=".5" y=".5" width="21" height="141" rx="2" fill="#5b6167" stroke="#70767c"/><g fill="none" stroke="#444a50"><circle cx="11" cy="21" r="7"/><circle cx="11" cy="21" r="3.500"/><path d="M16 2h4v4h-4zM9 34h4M6 48l4 8h6l2-8M8 50v-6M10 48v-7M13 48v-7M16 49v-6M4 62l13 12M16 61L4 73M9 81h4M4 94c0-4 14-4 14 0s-14 4-14 0M11 86v15M14 88v11M9 106h4M3 114h4v4H3zM9 114h4v4H9zM15 114h4v4h-4zM4 121h12v9H4z"/><circle cx="15" cy="70" r="3"/><circle cx="18" cy="137" r="2"/></g><path d="M8 123l4 2-4 3z" fill="#3d4349"/></svg>

    <div class="dlg" role="dialog" aria-label="Create Points">
      <div class="dhead"><span>Create Points</span><div class="dbtns"><button aria-label="Pin"><svg viewBox="0 0 12 12"><circle cx="6" cy="6" r="4" fill="#dce2ea" stroke="#fff"/><circle cx="8" cy="4" r="3" fill="#efefef" stroke="#667"/></svg></button><button>?</button><button class="x" aria-label="Close"><svg viewBox="0 0 12 12"><path d="M3 3l6 6M9 3L3 9" stroke="#fff" stroke-width="2.200"/></svg></button></div></div>
      <div class="dtools">
        <button aria-label="Miscellaneous"><svg class="ic" viewBox="0 0 16 16"><use href="#diam" x="3" width="13" height="13"/><path d="M0 12h6M3 9v6" stroke="#777"/></svg><i class="car big"></i></button>
        <button aria-label="Intersection"><svg class="ic" viewBox="0 0 16 16"><use href="#diam" x="3" width="13" height="13"/><path d="M2 2v12M0 12l2 3 2-3M5 14h9" stroke="#444"/></svg><i class="car big"></i></button>
        <button aria-label="Alignment"><svg class="ic" viewBox="0 0 16 16"><use href="#diam" x="4" width="12" height="12"/><path d="M1 1c3 4 0 8 0 13h13" stroke="#777" fill="none"/></svg><i class="car big"></i></button>
        <button aria-label="Surface"><svg class="ic" viewBox="0 0 16 16"><use href="#tsurf" width="14" height="16"/><use href="#diam" x="6" width="9" height="9"/></svg><i class="car big"></i></button>
        <button aria-label="Interpolate"><svg class="ic" viewBox="0 0 16 16"><use href="#diam" x="3" y="2" width="11" height="11"/><path d="M1 1l14 13M12 14h4" stroke="#666"/></svg><i class="car big"></i></button>
        <button aria-label="Slope"><svg class="ic" viewBox="0 0 16 16"><path d="M2 14V5l4-3 4 3v9z" fill="#e0e0e0" stroke="#777"/><use href="#diam" x="6" y="4" width="10" height="10"/></svg><i class="car big"></i></button>
        <button aria-label="Import"><svg class="ic" viewBox="0 0 16 16"><use href="#diam" x="4" y="3" width="12" height="12"/><path d="M1 3h7V0l5 5-5 5V7H1z" fill="#3587b8"/></svg></button>
        <button class="more" aria-label="Expand"><svg viewBox="0 0 12 12"><path d="M2 2l4 3 4-3M2 6l4 4 4-4" fill="none" stroke="#888" stroke-width="2"/></svg></button>
      </div>
      <p>Select a command from the point creation tools</p>
    </div>

    <div class="cmd">
      <div class="log"><span class="dim">Loading AECC Building Site Manager Items...</span><span>Command:</span><span class="hot">Command:</span></div>
      <div class="cline"><svg viewBox="0 0 36 17"><path d="M4 3v11M6.500 3v11" stroke="#ccc" stroke-dasharray="1 1"/><path d="M10 5l7 7M17 5l-7 7" stroke="#ccc" stroke-width="1.500"/><path d="M26 6l7 7" stroke="#ccc" stroke-width="2.200"/><path d="M24 4v4h4V4" stroke="#ccc" fill="none" stroke-width="1.500"/></svg>
        <svg class="prompt" viewBox="0 0 18 11"><path d="M0 0h10v10H0z" fill="#a5a7ba" stroke="#777b90"/><path d="M2 3l3 2-3 2M5 8h3" stroke="#2f3347" fill="none"/><path d="M12 4h4l-2 3z" fill="#777"/></svg>
        <input type="text" placeholder="Type a command" aria-label="Command line"><i class="up"></i></div>
    </div>
  </section>

  <aside class="rt">
    <div class="grp g1"><svg class="ic"><use href="#flag"/></svg><svg class="ic"><use href="#slope"/></svg><svg class="ic"><use href="#leaf"/></svg><svg class="ic"><use href="#flag"/></svg><svg class="ic"><use href="#dup"/></svg><svg class="ic"><use href="#earth"/></svg><svg class="ic"><use href="#globe"/></svg><svg class="ic"><use href="#pt"/></svg><svg class="ic"><use href="#pta"/></svg><svg class="ic"><use href="#ptl"/></svg><svg class="ic"><use href="#ptl"/></svg><svg class="ic"><use href="#flag"/></svg><svg class="ic"><use href="#red"/></svg></div>
    <div class="grp g2"><svg class="ic"><use href="#ptc"/></svg></div>
    <div class="grp g3"><svg class="ic"><use href="#redc"/></svg><svg class="ic"><use href="#redp"/></svg><svg class="ic"><use href="#redp"/></svg></div>
    <div class="grp g4"><svg class="ic"><use href="#dim"/></svg><svg class="ic"><use href="#dim2"/></svg><svg class="ic"><use href="#dim2"/></svg><svg class="ic"><use href="#zig"/></svg><svg class="ic"><use href="#cone"/></svg><svg class="ic"><use href="#orange"/></svg><svg class="ic"><use href="#arcb"/></svg></div>
    <div class="grp g5"><svg class="ic"><use href="#ptc"/></svg><svg class="ic"><use href="#dup"/></svg><svg class="ic"><use href="#ptc"/></svg></div>
  </aside>
</main>

<footer class="status">
  <nav class="lay"><a href="#" class="on">Model</a><a href="#">Layout1</a><button aria-label="New layout"><svg viewBox="0 0 16 16"><use href="#plus"/></svg></button></nav>
  <div class="sb">
    <button>MODEL</button>
    <div class="tight"><svg class="ic"><use href="#grid"/></svg><svg class="ic"><use href="#bars"/></svg><i class="car big"></i></div>
    <div><svg class="ic"><use href="#dyn"/></svg></div>
    <div class="tight"><svg class="ic"><use href="#ortho"/></svg><svg class="ic"><use href="#polar"/></svg><i class="car big"></i><svg class="ic"><use href="#iso"/></svg><i class="car big"></i></div>
    <div><svg class="ic"><use href="#track"/></svg></div>
    <div><svg class="ic"><use href="#snap"/></svg><i class="car big"></i></div>
    <div><svg class="ic blue"><use href="#ann"/></svg><svg class="ic"><use href="#ann"/></svg><svg class="ic"><use href="#ann2"/></svg><span>1:200</span><i class="car big"></i></div>
    <div><svg class="ic"><use href="#gear"/></svg><i class="car big"></i></div>
    <div><svg class="ic"><use href="#plus"/></svg></div>
    <div><svg class="ic"><use href="#geo"/></svg><span>1.4</span></div>
    <div><svg class="ic"><use href="#shapes"/></svg></div>
    <div><svg class="ic"><use href="#perf"/></svg></div>
    <div><svg class="ic"><use href="#full"/></svg><svg class="ic"><use href="#menu"/></svg></div>
  </div>
</footer>

<footer class="task">
  <button class="start" aria-label="Start"><svg viewBox="0 0 12 12"><path d="M0 2l5-1v5H0zM6 1l6-1v6H6zM0 7h5v4l-5-1zM6 7h6v5l-6-1z" fill="#fff"/></svg></button>
  <div class="find"><svg viewBox="0 0 16 16"><circle cx="8" cy="8" r="6.500" fill="none" stroke="#111" stroke-width="2"/></svg><input type="text" placeholder="Type here to search" aria-label="Search"><svg class="mic" viewBox="0 0 10 14"><rect x="3" y="1" width="4" height="8" rx="1" fill="none" stroke="#444"/><path d="M1 8c0 4 8 4 8 0M5 11v2" stroke="#444" fill="none"/></svg></div>
  <button class="tv" aria-label="Task view"><svg viewBox="0 0 16 16"><path d="M4 3h8v10H4zM2 4H1v8h1M14 4h1v8h-1" stroke="#ddd" stroke-width="1.300" fill="none"/></svg></button>
  <div class="apps">
    <button aria-label="Visual Studio"><svg viewBox="0 0 16 16"><path d="M1 1h14v14H1z" fill="#68217a"/><path d="M2 5l9 7V4l-9 7z" fill="none" stroke="#fff" stroke-width="2"/></svg></button>
    <button class="run cur" aria-label="AutoCAD Civil 3D"><svg viewBox="0 0 16 16"><path d="M0 0h16v16H0z" fill="#d9f0fb"/><path d="M3 12L7 1h3l4 11h-3l-1-3H7l-1 3z" fill="#176faa"/><path d="M9 13h5" stroke="#52a0ca" stroke-width="2"/></svg></button>
    <button class="run" aria-label="Recorder"><svg viewBox="0 0 16 16"><path d="M0 1h15v10H0z" fill="#666" stroke="#ddd"/><path d="M1 10V2h12z" fill="#aaa"/><path d="M3 13h9v2H3z" fill="#bbb"/><circle cx="12.500" cy="12.500" r="3" fill="#e52522"/></svg></button>
    <button class="run" aria-label="Chrome"><svg viewBox="0 0 16 16"><circle cx="8" cy="8" r="7.500" fill="#f3c52c"/><path d="M8 8L1.500 4.300A7.500 7.500 0 0 1 14.500 4.500z" fill="#dd4b3e"/><path d="M8 8l-.8 7.400A7.500 7.500 0 0 1 1.500 4.300z" fill="#36a05a"/><circle cx="8" cy="8" r="3.500" fill="#4a8af4" stroke="#fff"/></svg></button>
    <button class="run" aria-label="UC Browser"><svg viewBox="0 0 16 16"><rect width="16" height="16" rx="3" fill="#f79a1e"/><path d="M3 5c1-3 5-3 5 0 0 2-3 3-4 5-1 3 1 4 3 4h4c3 0 3-5 0-5-2 0-3 2-1 3" fill="none" stroke="#fff" stroke-width="1.800"/></svg></button>
    <button aria-label="GitHub"><svg viewBox="0 0 16 16"><circle cx="8" cy="8" r="7.500" fill="#843a9b" stroke="#d9b9e2"/><path d="M4 11V4l2 1h4l2-1v7c-1 2-7 2-8 0z" fill="#fff"/></svg></button>
    <button aria-label="Edge"><svg viewBox="0 0 16 16"><path d="M3 8h10c0-7-9-6-11 0 0 7 6 8 11 5" fill="none" stroke="#0d7dda" stroke-width="3"/></svg></button>
    <button class="run" aria-label="File Explorer"><svg viewBox="0 0 16 16"><path d="M0 2h6l2 2h8v11H0z" fill="#f6d469"/><path d="M4 15v-5h8v5h-3v-2H7v2z" fill="#3e9ddb"/></svg></button>
    <button aria-label="Notepad"><svg viewBox="0 0 16 16"><path d="M5 1h10l-3 13H1z" fill="#a5cdd8"/><path d="M6 4h7M5 7h7M4 10h7" stroke="#5f9cae"/></svg></button>
    <button class="run" aria-label="Calculator"><svg viewBox="0 0 16 16"><path d="M2 0h12v16H2z" fill="#fff"/><path d="M4 2h8v2H4z" fill="#222"/><path d="M4 7h8M4 10h8M4 13h8" stroke="#222" stroke-width="2" stroke-dasharray="2 1"/></svg></button>
    <button class="run" aria-label="Outlook"><svg viewBox="0 0 16 16"><path d="M8 4h8v8H8z" fill="#fff" stroke="#0873c4"/><path d="M8 5l4 4 4-4" stroke="#0873c4" fill="none"/><path d="M0 2l9-2v16l-9-2z" fill="#0873c4"/><circle cx="4.500" cy="8" r="2.300" fill="none" stroke="#fff" stroke-width="1.500"/></svg></button>
    <button class="run" aria-label="OneNote"><svg viewBox="0 0 16 16"><path d="M8 2h7v12H8z" fill="#fff" stroke="#80397b"/><path d="M9 5h6M9 8h6M9 11h6" stroke="#80397b"/><path d="M0 2l9-2v16l-9-2z" fill="#80397b"/><path d="M3 11V5l3 6V5" stroke="#fff" fill="none"/></svg></button>
    <button aria-label="Notepad++"><svg viewBox="0 0 16 16"><path d="M2 1h12v14H2z" fill="#edf2da"/><path d="M3 8h8v6H3z" fill="#72b13f"/><path d="M15 1L8 11" stroke="#d69b25" stroke-width="2"/><path d="M4 4h6" stroke="#777"/></svg></button>
    <button aria-label="WeTransfer"><svg viewBox="0 0 16 16"><path d="M3 0h13v12l-3 4H0V3z" fill="#30b90c"/><path d="M2 6l1 4 1-3 1 3 1-4M10 6H8v4h2M8 8h2M12 10V6h2M12 8h2" stroke="#fff" fill="none"/></svg></button>
    <button aria-label="Paint"><svg viewBox="0 0 16 16"><ellipse cx="8" cy="11" rx="7" ry="4" fill="#ddd"/><path d="M1 11l7 0-4 4z" fill="#ed4b54"/><path d="M8 11l6-2-1 5z" fill="#48ba4b"/><path d="M8 11l-5-3 6-1z" fill="#55b9e3"/><path d="M14 1L7 9" stroke="#9b9dbb" stroke-width="1.500"/><path d="M6 11l5 4-5 0z" fill="#d638c4"/></svg></button>
    <button aria-label="Civil 3D"><svg viewBox="0 0 16 16"><use href="#civil"/></svg></button>
    <button class="run" aria-label="Sticky Notes"><svg viewBox="0 0 16 16"><path d="M2 2h12v12H2z" fill="#fff"/><path d="M8 14V9h6z" fill="#222"/></svg></button>
    <button class="run" aria-label="Skype"><svg viewBox="0 0 16 16"><circle cx="8" cy="8" r="7" fill="#13a8e8"/><circle cx="4" cy="4" r="4" fill="#13a8e8"/><circle cx="12" cy="12" r="4" fill="#13a8e8"/><path d="M11 5c-2-2-6-1-6 1s6 1 6 4-5 3-6 0" stroke="#fff" stroke-width="2" fill="none"/></svg></button>
    <button class="run" aria-label="Word"><svg viewBox="0 0 16 16"><path d="M8 2h7v12H8z" fill="#fff" stroke="#2a5699"/><path d="M9 5h5M9 8h5M9 11h5" stroke="#2a5699"/><path d="M0 2l9-2v16l-9-2z" fill="#2a5699"/><path d="M2 5l1 6 2-5 1 5 1-6" stroke="#fff" fill="none"/></svg></button>
    <button class="run" aria-label="Civil 3D window"><svg viewBox="0 0 16 16"><use href="#civil"/></svg></button>
  </div>
  <div class="tray">
    <svg class="ppl" viewBox="0 0 16 16"><circle cx="6" cy="8" r="2.300"/><circle cx="11" cy="4" r="2.300"/><path d="M2 15c0-5 8-5 8 0M9 8c2-2 6 0 6 4"/></svg>
    <svg viewBox="0 0 16 16"><path d="M3 11l5-5 5 5"/></svg>
    <svg viewBox="0 0 16 16"><circle cx="8" cy="8" r="7" fill="#db2830" stroke="none"/><path d="M5 11V6l3 3 3-3v5" stroke-width="2"/></svg>
    <svg viewBox="0 0 16 16"><path d="M1 12c-1-4 2-5 4-4 1-4 7-4 7 0 4 0 4 4 2 4z" fill="#fff"/></svg>
    <svg viewBox="0 0 16 16"><path d="M4 2l4 3-4 3-4-3zM12 2l4 3-4 3-4-3zM4 8l4 3 4-3v3l-4 3-4-3z" fill="#fff" stroke="none"/></svg>
    <svg viewBox="0 0 16 16"><path d="M4 4h11v7H4zM7 14h6M10 11v3M1 2h4v4H1zM3 6v8h3"/></svg>
    <svg viewBox="0 0 16 16"><path d="M1 6h3l4-4v12l-4-4H1zM10 6c1 1 1 3 0 4M12 4c3 2 3 6 0 8"/></svg>
    <div class="clock">11:37 PM<br>28/03/2018</div>
    <svg class="note" viewBox="0 0 16 16"><path d="M2 2h12v9H10l-2 3v-3H2z"/></svg>
  </div>
</footer>
</body>
</html>
```
FILE: styles.css
```css
* { box-sizing: border-box; }
body { margin: 0; min-height: 100vh; display: flex; flex-direction: column; background: #363636; color: #e4e4e4; font: 8px/12px Roboto, "Open Sans", sans-serif; overflow-x: hidden; }
.sprite { display: none; }
button { font: inherit; color: inherit; background: none; border: 0; padding: 0; display: flex; align-items: center; white-space: nowrap; text-align: left; }
a { color: inherit; text-decoration: none; }
h1, h2, p, ul { margin: 0; padding: 0; font-size: inherit; font-weight: 400; }
svg { flex: none; display: block; }
.ic { width: 11px; height: 11px; }
.car { flex: none; border: 2px solid transparent; border-top: 2px solid #ddd; border-bottom: 0; width: 4px; height: 2px; }
.car.big { border-width: 3px 3px 0; width: 6px; height: 3px; }

/* title bar and ribbon tabs */
.top { display: grid; grid-template-columns: 28px 1fr; grid-template-rows: 16px 14px; background: #4f4f4f; }
.appbtn { grid-row: span 2; position: relative; background: linear-gradient(#5b5b5b, #464646); border: 1px solid #333; height: 28px; }
.appbtn svg { width: 21px; height: 22px; align-self: flex-start; }
.appbtn .c3d { position: absolute; left: 6px; bottom: 0; font-size: 6px; line-height: 7px; font-weight: 700; color: #b3b3b3; }
.title { display: flex; background: #fff; color: #222; }
.qat { display: flex; align-items: center; gap: 4px; width: 246px; padding-left: 5px; background: linear-gradient(#808080, #4f4f4f); color: #eee; }
.qat > .ic { margin-right: 1px; }
.workspace { flex: 1; height: 14px; gap: 2px; padding: 0 3px; background: linear-gradient(#707070, #565656); border: 1px solid #484848; }
.qat .workspace { margin-left: -3px; }
.workspace span { flex: 1; }
.qat > .big { margin-right: 3px; }
.title h1 { flex: 1; text-align: center; line-height: 16px; }
.info { display: flex; align-items: center; gap: 6px; width: 298px; background: linear-gradient(#808080, #4f4f4f); color: #eee; }
.play { width: 8px; height: 16px; border-right: 1px solid #444; justify-content: center; }
.play i { border: 3px solid transparent; border-left-color: #eee; border-right: 0; }
.info input { width: 120px; height: 14px; margin-left: -6px; margin-right: -3px; padding: 0 2px; border: 1px solid #555; background: #6f6f6f; font: italic 8px Roboto, sans-serif; color: #ddd; }
.info input::placeholder { color: #c4c4c4; }
.sign { width: 75px; gap: 3px; }
.sign .car { margin-left: auto; }
.info > .car { margin-left: -2px; }
.helpic { margin-left: 4px; }
.win { display: flex; width: 108px; justify-content: space-between; padding: 0 11px 0 25px; align-items: center; }
.win svg { width: 12px; height: 12px; fill: none; stroke: #333; }
.tabs { display: flex; align-items: stretch; line-height: 14px; gap: 7px; padding-left: 3px; color: #c8c8c8; background: linear-gradient(#4b4b4b, #555); border-bottom: 1px solid #404040; }
.tabs a { padding: 0 3px; }
.tabs a.on { padding: 0 5px; background: linear-gradient(#777, #5a5a5a); border: 1px solid #888; border-bottom: 0; line-height: 13px; color: #fff; margin-right: -2px; }
.tabs .car { align-self: center; margin-left: -4px; }
.rmin { align-self: center; width: 9px; height: 5px; background: #ddd; border-radius: 1px; justify-content: center; margin-left: 10px; }
.rmin i { width: 3px; height: 2px; background: #444; }

/* ribbon panels */
.ribbon { display: grid; grid-template-columns: 77px 86px 215px 88px 79px 166px 183px 52px 1fr; height: 66px; background: linear-gradient(#4b4b4b, #393939); border-bottom: 1px solid #6e6e6e; }
.panel { display: flex; flex-direction: column; background: linear-gradient(#5d5d5d, #545454); border-right: 1px solid #444; }
.body { flex: 1; display: grid; grid-template-rows: repeat(3, 16px); align-content: center; padding-top: 2px; }
.body button { gap: 4px; }
.foot { display: flex; align-items: center; height: 13px; line-height: 12px; justify-content: center; gap: 4px; background: linear-gradient(#4f4f4f, #474747); white-space: nowrap; }
.palettes { display: flex; padding: 3px 3px 0; gap: 2px; align-items: flex-start; }
.palettes .toolspace { width: 39px; height: 48px; flex-direction: column; justify-content: flex-start; gap: 1px; padding-top: 1px; background: linear-gradient(#5c7db8, #4a65a0 55%, #6486c4); border: 1px solid #3c5078; color: #fff; }
.toolspace svg { width: 22px; height: 22px; }
.pal { display: grid; grid-template: repeat(3, 16px) / 16px 16px; }
.pal button { justify-content: center; }
.pal .b { background: linear-gradient(#6486c4, #4a65a0); border: 1px solid #33466b; }
.pal .dark { color: #222; }
.ground { padding-left: 16px; }
.design { grid-template-columns: 71px 65px 1fr; padding-left: 4px; }
.views { padding-left: 8px; }
.draw { grid-template-columns: 25px 27px 1fr; padding-left: 4px; }
.modify { grid-template-columns: 47px 47px 49px 1fr; padding-left: 5px; }
.modify .car { margin-left: auto; margin-right: 8px; }
.layers { display: flex; align-items: center; padding-left: 3px; gap: 3px; }
.body .tall { flex-direction: column; text-align: center; line-height: 10px; gap: 2px; width: 37px; }
.tall svg { width: 22px; height: 22px; }
.laygrid { flex: 1; display: grid; grid-template-rows: repeat(3, 16px); padding-right: 1px; }
.laygrid .combo { height: 14px; background: linear-gradient(#454545, #666); border: 1px solid #3c3c3c; padding: 0 3px 0 2px; gap: 3px; }
.combo b { width: 8px; height: 8px; background: #fff; }
.combo .car { margin-left: auto; }
.lrow { display: flex; align-items: center; gap: 5px; padding-left: 2px; }
.clip { display: flex; align-items: flex-start; }
.clip .tall { width: 36px; padding-top: 3px; }
.cc { display: grid; grid-template-rows: repeat(3, 16px); padding-top: 1px; }

/* drawing tabs */
.docs { display: flex; align-items: flex-end; height: 19px; padding-left: 10px; border-bottom: 3px solid #565656; }
.doc { height: 14px; line-height: 14px; width: 86px; padding-left: 11px; background: #4c4c4c; border-radius: 7px 8px 0 0; color: #aaa; }
.doc.on { width: 84px; padding-left: 7px; background: linear-gradient(#777, #5f5f5f); color: #fff; display: flex; align-items: center; justify-content: space-between; padding-right: 9px; }
.doc svg { width: 6px; height: 6px; }
.docs button { width: 15px; height: 11px; margin: 0 0 1px 3px; background: #555; border-radius: 5px; justify-content: center; color: #ccc; }
.docs button svg, .lay button svg { width: 7px; height: 7px; }

.work { flex: 1; display: grid; grid-template-columns: 177px 1fr 22px; min-height: 540px; background: #565656; }

/* toolspace */
.space { display: grid; grid-template-columns: 162px 15px; }
.left { display: flex; flex-direction: column; }
.left h2 { padding: 2px 10px; line-height: 12px; height: 16px; }
.bar { display: flex; align-items: center; gap: 7px; height: 18px; padding: 0 4px 0 3px; }
.bar .ic:first-child { margin-right: auto; }
.bar button { width: 10px; height: 10px; justify-content: center; background: #f0f0f0; color: #222; font-weight: 700; line-height: 10px; }
.left select { height: 14px; margin: 1px 0 3px; border: 0; border-radius: 0; padding: 0 2px; font: inherit; color: #111; appearance: none; background: #dedede url("data:image/svg+xml,%3Csvg xmlns='http://www.w3.org/2000/svg' width='8' height='6'%3E%3Cpath d='M1 1l3 3 3-3' fill='none' stroke='%23666'/%3E%3C/svg%3E") no-repeat right 2px center; }
.tree { flex: 1; list-style: none; background: #fff; color: #1a1a1a; border: 1px solid #999; border-width: 0 1px 1px; display: grid; grid-template-rows: repeat(22, minmax(13px, 1fr)); align-content: start; padding-bottom: 142px; }
.tree li { position: relative; display: flex; align-items: center; padding-left: 18px; }
.tree li.root { padding-left: 5px; }
.tree .ex { z-index: 1; flex: none; width: 7px; height: 7px; border: 1px solid #aaa; background: #fff; font: 7px/5px "DejaVu Sans", sans-serif; text-align: center; margin-right: 4px; }
.tree .no { flex: none; width: 11px; }
.tree .ic { width: 12px; height: 12px; margin-right: 3px; color: #555; }
.tree li:not(.root)::before { content: ""; position: absolute; left: 21px; top: 0; bottom: 0; width: 6px; border-left: 1px dotted #aaa; background: linear-gradient(#bbb, #bbb) 0 50% / 6px 1px no-repeat; }
.tree li.last::before { bottom: 50%; background-position: 0 100%; }
.tree li.trunk::after { content: ""; position: absolute; left: 8px; top: 0; bottom: 0; border-left: 1px dotted #999; }
.tree .sel span { flex: 1; background: #9c9c9c; line-height: 12px; margin-left: -2px; padding-left: 2px; }
.preview { height: 63px; margin: 4px 0 2px; border: 1px solid #8c8c8c; background: #595959; }
.side { padding-top: 16px; background: #555; }
.side a { height: 81px; display: flex; align-items: center; justify-content: center; border: 1px solid #3e3e3e; border-width: 1px 1px 1px 0; margin-right: 1px; background: #4d4d4d; color: #a4a4a4; }
.side a.on { color: #eee; background: #595959; }
.side span { writing-mode: vertical-rl; transform: rotate(180deg); line-height: 12px; }

/* drawing canvas: free-floating items */
.canvas { position: relative; background: #212830; overflow: hidden; }
.vp { padding: 4px 3px; line-height: 12px; }
.canvas > svg, .cube, .wcs, .dlg, .cmd { position: absolute; }
.canvas > .vpwin { right: 5px; top: 6px; width: 36px; height: 10px; }
.canvas > .cross { left: 358px; top: 147px; width: 65px; height: 65px; }
.canvas > .ucs { left: 528px; top: 278px; width: 52px; height: 52px; }
.cube { right: 11px; top: 26px; width: 88px; height: 92px; color: #b2b5b9; }
.cube b, .cube span { position: absolute; font: 700 12px/12px "Liberation Sans", sans-serif; }
.cube .n { left: 40px; top: 3px; } .cube .s { left: 40px; bottom: 2px; }
.cube .w { left: 0; top: 40px; } .cube .e { right: 2px; top: 40px; }
.cube span { font-size: 8px; left: 36px; top: 39px; color: #444955; }
.wcs { right: 39px; top: 129px; width: 32px; height: 12px; background: #8b9097; border: 1px solid #a3a7ad; border-radius: 3px; color: #d6d9dd; padding: 0 2px; justify-content: space-between; line-height: 10px; }
.wcs svg { width: 8px; height: 6px; }
.canvas > .nav { right: 2px; top: 157px; width: 22px; height: 142px; }

.dlg { left: 425px; top: 184px; width: 302px; background: #d5e0ee; border: 1px solid #f0f4f8; color: #222; padding: 0 5px 4px; }
.dhead { display: flex; justify-content: space-between; height: 20px; margin: 0 -5px; background: linear-gradient(#b9c9db, #dbe6f2); }
.dhead span { padding: 6px 5px 0; color: #94999f; }
.dbtns { display: flex; height: 12px; }
.dbtns button { width: 16px; justify-content: center; background: linear-gradient(#dce6f1, #9eb2c8); border: 1px solid #7d90a8; border-top: 0; font-weight: 700; line-height: 10px; }
.dbtns .x { width: 25px; background: linear-gradient(#e18d79, #c43b22); border-color: #8d3e35; }
.dbtns svg { width: 11px; height: 11px; }
.dtools { display: flex; gap: 8px; height: 16px; background: #f0f0f0; padding: 0 8px; color: #777; }
.dtools button { gap: 3px; }
.dtools .ic { width: 12px; height: 12px; }
.dtools .car { border-top-color: #111; }
.dtools .more { margin-left: auto; }
.more svg { width: 12px; height: 12px; }
.dlg p { background: #f0f0f0; border-top: 1px solid #ddd; line-height: 13px; padding-left: 1px; }

.cmd { left: 286px; bottom: 0; width: 510px; }
.log { display: flex; flex-direction: column; align-items: flex-start; gap: 3px; padding: 0 0 2px 40px; font: 8px/10px "DejaVu Sans Mono", monospace; }
.log span { background: #4d5156; padding: 0 1px; color: #ccc; border-radius: 1px; }
.log .dim { color: #aaa; } .log .hot { color: #eee; }
.cline { display: flex; align-items: center; height: 17px; background: #b9babf; border-radius: 2px 2px 0 0; padding-right: 3px; }
.cline > svg:first-child { width: 36px; height: 17px; background: linear-gradient(#626262, #444); }
.prompt { width: 18px; height: 11px; margin: 0 3px 0 4px; }
.cline input { flex: 1; border: 0; padding: 0; background: none; font: italic 8px "DejaVu Sans Mono", monospace; }
.cline input::placeholder { color: #6b6b70; }
.up { border: 3px solid transparent; border-top: 0; border-bottom-color: #111; }

/* right tool strip */
.rt { padding: 3px 2px 0 3px; border-left: 1px solid #333; }
.grp { display: grid; grid-auto-rows: 1fr; justify-items: center; align-items: center; border: 1px solid #3c3c3c; border-width: 0 1px; margin-right: 1px; background: #505050; }
.grp + .grp { box-shadow: inset 0 1px #ccc; padding-top: 3px; }
.g1 { height: 195px; padding-top: 3px; border-top: 1px dotted #999; }
.g2 { height: 19px; } .g3 { height: 48px; } .g4 { height: 106px; }
.grp.g5 { height: 49px; border-width: 1px; box-shadow: none; }

/* layout tabs and status buttons */
.status { display: flex; justify-content: space-between; height: 20px; background: #3a3a3a; border-top: 1px solid #555; }
.lay { display: flex; height: 12px; line-height: 12px; padding-left: 8px; }
.lay a, .lay button { background: #535353; color: #bbb; padding: 0 7px; margin-right: 2px; border-radius: 0 0 6px 6px; }
.lay a.on { background: #777; color: #fff; font-weight: 700; padding: 0 8px; }
.lay button { padding: 0 4px; }
.sb { display: flex; border: 1px solid #606060; border-right: 0; color: #eee; }
.sb > * { display: flex; align-items: center; gap: 5px; padding: 0 2px; border-right: 1px solid #666; color: #c8c8c8; white-space: nowrap; }
.sb > .tight { gap: 4px; }
.sb > button, .sb span { color: #eee; }
.sb .ic { width: 12px; height: 12px; }
.sb .blue { color: #2d86e8; }

/* taskbar */
.task { display: flex; height: 27px; background: #232323; }
.start { width: 32px; justify-content: center; }
.start svg { width: 12px; height: 12px; }
.find { display: flex; align-items: center; width: 230px; background: #f2f2f2; padding: 0 9px 0 6px; gap: 6px; }
.find svg { width: 15px; height: 15px; }
.find input { flex: 1; min-width: 0; border: 0; padding: 0; background: none; font: 10px "Noto Sans", sans-serif; }
.find input::placeholder { color: #4a4a4a; }
.find .mic { width: 10px; height: 14px; }
.tv { width: 33px; justify-content: center; }
.tv svg { width: 15px; height: 15px; }
.apps { display: flex; flex: 0 1 654px; }
.apps button { flex: 1; justify-content: center; border-bottom: 2px solid transparent; margin: 0 3px; padding-top: 2px; }
.apps svg { width: 16px; height: 16px; }
.apps .run { border-bottom-color: #6ba4d6; }
.apps .cur { background: #4a4a4a; margin: 0; }
.tray { margin-left: auto; display: flex; align-items: center; gap: 4px; padding-right: 15px; }
.tray svg { width: 12px; height: 12px; fill: none; stroke: #fff; }
.tray .ppl { margin-right: 8px; }
.clock { width: 44px; text-align: center; line-height: 12px; }
.tray .note { width: 14px; height: 14px; margin-left: 4px; }
```
